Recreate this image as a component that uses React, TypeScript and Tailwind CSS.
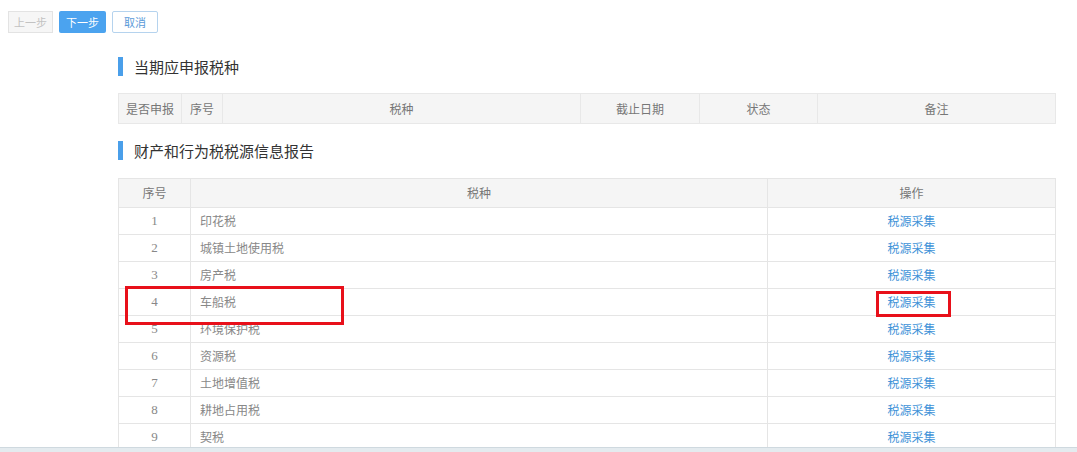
const font = { fontFamily: '"Noto Sans CJK SC", "Microsoft YaHei", sans-serif' };

const taxes = [
  "印花税",
  "城镇土地使用税",
  "房产税",
  "车船税",
  "环境保护税",
  "资源税",
  "土地增值税",
  "耕地占用税",
  "契税",
];

function SectionTitle({ text }: { text: string }) {
  return (
    <div className="flex items-center h-[20px]">
      <div className="w-[5px] h-[19px] bg-[#4a9fea]" />
      <span className="ml-[11px] text-[15px] text-[#333] leading-none">{text}</span>
    </div>
  );
}

export default function App() {
  return (
    <div
      className="relative h-[452px] w-[1077px] overflow-hidden bg-white text-[12px] text-[#666]"
      style={font}
    >
      <div className="flex gap-[6px] pl-[8px] pt-[11px]">
        <button className="h-[22px] w-[45px] border border-[#e3e3e3] bg-[#f6f6f6] text-[11px] text-[#c2c2c2]">
          上一步
        </button>
        <button className="h-[22px] w-[47px] rounded-[2px] bg-[#4ba3ef] text-[11px] text-white">
          下一步
        </button>
        <button className="h-[22px] w-[46px] rounded-[2px] border border-[#b5d3ee] bg-white text-[11px] text-[#5a9ad8]">
          取消
        </button>
      </div>

      <div className="ml-[118px] w-[938px]">
        <div className="mt-[23px]">
          <SectionTitle text="当期应申报税种" />
        </div>
        <table className="mt-[17px] w-full border-collapse">
          <thead>
            <tr className="h-[30px] bg-[#f5f5f5] text-[#777]">
              <th className="w-[63px] border border-[#e8e8e8] font-normal">是否申报</th>
              <th className="w-[41px] border border-[#e8e8e8] font-normal">序号</th>
              <th className="w-[358px] border border-[#e8e8e8] font-normal">税种</th>
              <th className="w-[119px] border border-[#e8e8e8] font-normal">截止日期</th>
              <th className="w-[118px] border border-[#e8e8e8] font-normal">状态</th>
              <th className="border border-[#e8e8e8] font-normal">备注</th>
            </tr>
          </thead>
        </table>

        <div className="mt-[16px]">
          <SectionTitle text="财产和行为税税源信息报告" />
        </div>
        <table className="mt-[18px] w-full border-collapse">
          <thead>
            <tr className="h-[29px] bg-[#f5f5f5] text-[#777]">
              <th className="w-[72px] border border-[#e5e5e5] font-normal">序号</th>
              <th className="w-[577px] border border-[#e5e5e5] font-normal">税种</th>
              <th className="border border-[#e5e5e5] font-normal">操作</th>
            </tr>
          </thead>
          <tbody>
            {taxes.map((t, i) => (
              <tr key={t} className="h-[27px]">
                <td
                  className="border border-[#e5e5e5] text-center text-[13px] text-[#888]"
                  style={{ fontFamily: '"Liberation Serif", serif' }}
                >
                  {i + 1}
                </td>
                <td className="border border-[#e5e5e5] pl-[9px] text-[#888]">{t}</td>
                <td className="border border-[#e5e5e5] text-center text-[#3f93d8]">税源采集</td>
              </tr>
            ))}
          </tbody>
        </table>
      </div>

      {/* annotation boxes */}
      <div className="absolute left-[125px] top-[286px] h-[39px] w-[219px] border-[3px] border-[#e8101a]" />
      <div className="absolute left-[876px] top-[291px] h-[26px] w-[75px] border-[3px] border-[#e8101a]" />

      <div className="absolute bottom-0 left-0 h-[5px] w-full border-t border-[#cfd9df] bg-[#e4ebef]" />
    </div>
  );
}
